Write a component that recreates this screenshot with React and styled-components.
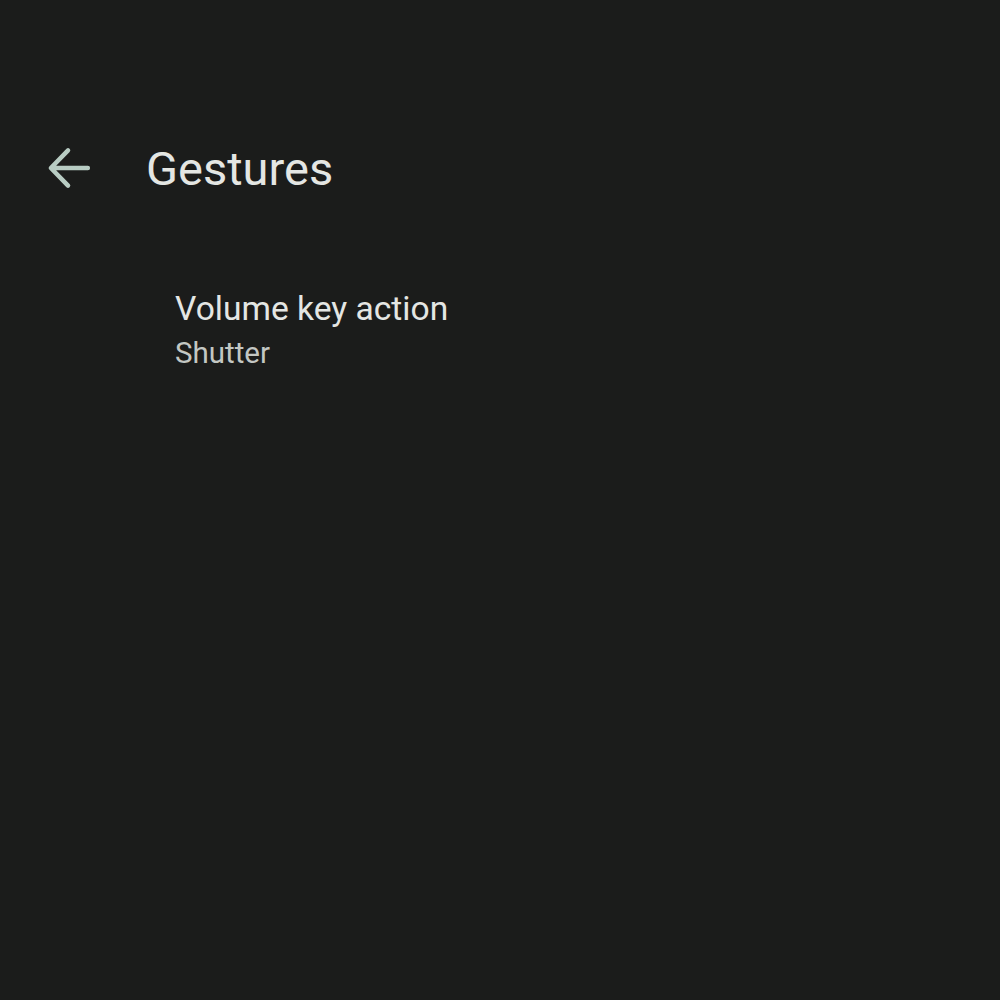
import React from 'react'
import styled, { createGlobalStyle } from 'styled-components'

const GlobalStyle = createGlobalStyle`
  html, body {
    margin: 0;
    padding: 0;
    background: #1b1c1b;
  }
  body {
    font-family: Roboto, "Noto Sans", sans-serif;
  }
`

const Screen = styled.div`
  width: 1000px;
  height: 1000px;
  background: #1b1c1b;
  display: flex;
  flex-direction: column;
`

const TopBar = styled.div`
  display: flex;
  align-items: center;
  height: 80px;
  margin-top: 128px;
  padding-left: 40px;
`

const BackButton = styled.button`
  width: 58px;
  height: 58px;
  padding: 0;
  border: none;
  background: none;
  display: flex;
  align-items: center;
  justify-content: center;
  color: #b8ccc3;
  cursor: pointer;
`

const Title = styled.h1`
  margin: 0 0 0 48px;
  font-size: 47px;
  font-weight: 400;
  color: #e4e6e3;
`

const List = styled.div`
  display: flex;
  flex-direction: column;
  padding: 80px 0 0 175px;
`

const Item = styled.div`
  display: flex;
  flex-direction: column;
  gap: 5px;
`

const ItemTitle = styled.div`
  font-size: 33.6px;
  color: #e4e6e3;
  line-height: 42px;
`

const ItemSummary = styled.div`
  font-size: 29.5px;
  color: #c3c7c3;
  line-height: 36px;
`

const BackArrow = () => (
  <svg width="58" height="58" viewBox="0 0 24 24" fill="none">
    <path
      d="M19.8 12H4.8M11.6 4.7L4.5 12l7.1 7.3"
      stroke="currentColor"
      strokeWidth="1.85"
      strokeLinecap="round"
      strokeLinejoin="round"
    />
  </svg>
)

const App = () => (
  <Screen>
    <GlobalStyle />
    <TopBar>
      <BackButton aria-label="Back">
        <BackArrow />
      </BackButton>
      <Title>Gestures</Title>
    </TopBar>
    <List>
      <Item>
        <ItemTitle>Volume key action</ItemTitle>
        <ItemSummary>Shutter</ItemSummary>
      </Item>
    </List>
  </Screen>
)

export default App
